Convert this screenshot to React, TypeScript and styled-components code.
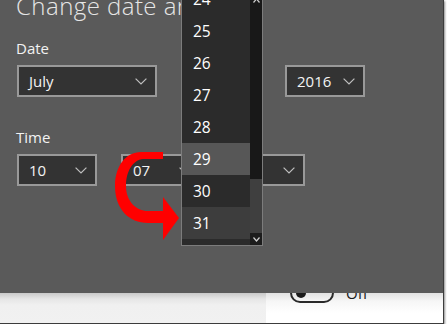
import React from "react";
import styled, { createGlobalStyle } from "styled-components";

const Global = createGlobalStyle`
  html, body { margin: 0; padding: 0; background: #ffffff; }
  body { font-family: "Open Sans", "Noto Sans", sans-serif; }
  * { box-sizing: border-box; }
`;

const Window = styled.div`
  width: 444px;
  height: 324px;
  display: flex;
  flex-direction: column;
  overflow: hidden;
  border-right: 1px solid #3c3c3c;
  border-bottom: 1px solid #3c3c3c;
  box-shadow: 1px 1px 2px rgba(0, 0, 0, 0.45);
`;

const Overlay = styled.div`
  position: relative;
  z-index: 1;
  height: 293px;
  flex: none;
  background: #5a5a5a;
  padding-left: 16px;
  display: flex;
  flex-direction: column;
`;

const Title = styled.div`
  margin-top: -9px;
  width: 230px;
  overflow: hidden;
  font-size: 24px;
  letter-spacing: 0.45px;
  line-height: 30px;
  font-weight: 300;
  color: #e6e6e6;
  white-space: nowrap;
`;

const Section = styled.div<{ $top: number }>`
  margin-top: ${(p) => p.$top}px;
  display: flex;
  flex-direction: column;
  gap: 7px;
`;

const Label = styled.div`
  font-size: 15px;
  line-height: 20px;
  color: #f2f2f2;
`;

const Row = styled.div`
  display: flex;
  gap: 24px;
  padding-left: 1px;
`;

const Combo = styled.div<{ $w: number }>`
  width: ${(p) => p.$w}px;
  height: 32px;
  border: 2px solid #999999;
  background: #333333;
  display: flex;
  align-items: center;
  justify-content: space-between;
  padding: 0 8px 0 10px;
  color: #f4f4f4;
  font-size: 15px;
`;

const Chevron = ({ color = "#bfbfbf" }: { color?: string }) => (
  <svg width="12" height="7" viewBox="0 0 12 7">
    <path d="M0.6 0.6 L6 6 L11.4 0.6" fill="none" stroke={color} strokeWidth="1.2" />
  </svg>
);

const Popup = styled.div`
  position: absolute;
  left: 181px;
  top: -18px;
  width: 82px;
  height: 264px;
  border: 1px solid #7c7c7c;
  background: #2b2b2b;
  display: flex;
  overflow: hidden;
`;

const List = styled.div`
  width: 68px;
  display: flex;
  flex-direction: column;
`;

const Item = styled.div<{ $tone?: "sel" | "hover" }>`
  height: 32px;
  flex: none;
  display: flex;
  align-items: center;
  padding-left: 11px;
  font-size: 15.5px;
  color: #ffffff;
  background: ${(p) => (p.$tone === "sel" ? "#575757" : p.$tone === "hover" ? "#3d3d3d" : "#2b2b2b")};
`;

const Scrollbar = styled.div`
  width: 12px;
  display: flex;
  flex-direction: column;
  background: #181818;
`;

const ScrollUp = styled.div`
  height: 22px;
  display: flex;
  align-items: flex-end;
  justify-content: center;
  padding-bottom: 2px;
`;

const Track = styled.div`
  flex: 1;
`;

const Thumb = styled.div`
  height: 54px;
  background: #3f3f3f;
`;

const ScrollDown = styled.div`
  height: 12px;
  display: flex;
  align-items: center;
  justify-content: center;
  background: #1c1c1c;
`;

const Arrow = styled.svg`
  position: absolute;
  left: 0;
  top: 0;
  pointer-events: none;
`;

const Bottom = styled.div`
  flex: 1;
  display: flex;
`;

const BottomLeft = styled.div`
  width: 266px;
  background: linear-gradient(#c9c9c9 0px, #e6e6e6 6px, #f0f0f0 12px, #f1f1f1);
`;

const BottomRight = styled.div`
  flex: 1;
  background: linear-gradient(#e2e2e2 0px, #f6f6f6 8px, #ffffff 20px);
  display: flex;
  align-items: flex-start;
  padding-left: 24px;
  gap: 12px;
`;

const Toggle = styled.div`
  margin-top: -10px;
  width: 44px;
  height: 20px;
  border: 2px solid #2a2a2a;
  border-radius: 10px;
  display: flex;
  align-items: center;
  padding-left: 4px;
`;

const Knob = styled.div`
  width: 10px;
  height: 10px;
  border-radius: 50%;
  background: #1a1a1a;
`;

const ToggleText = styled.div`
  margin-top: -10px;
  font-size: 15px;
  line-height: 20px;
  color: #1a1a1a;
`;

export default function App() {
  const days = ["24", "25", "26", "27", "28", "29", "30", "31", "1"];
  return (
    <>
      <Global />
      <Window>
        <Overlay>
          <Title>Change date and time</Title>
          <Section $top={17}>
            <Label>Date</Label>
            <Row>
              <Combo $w={140}>
                <span>July</span>
                <Chevron />
              </Combo>
              <Combo $w={80}>
                <Chevron />
              </Combo>
              <Combo $w={80}>
                <span>2016</span>
                <Chevron />
              </Combo>
            </Row>
          </Section>
          <Section $top={30}>
            <Label>Time</Label>
            <Row>
              <Combo $w={80}>
                <span>10</span>
                <Chevron />
              </Combo>
              <Combo $w={80}>
                <span>07</span>
                <Chevron />
              </Combo>
              <Combo $w={80}>
                <span />
                <Chevron />
              </Combo>
            </Row>
          </Section>

          <Popup>
            <List>
              {days.map((d) => (
                <Item key={d} $tone={d === "29" ? "sel" : d === "31" ? "hover" : undefined}>
                  {d}
                </Item>
              ))}
            </List>
            <Scrollbar>
              <ScrollUp>
                <svg width="7" height="5" viewBox="0 0 7 5">
                  <path d="M0.5 4.5 L3.5 1 L6.5 4.5" fill="none" stroke="#d0d0d0" strokeWidth="1.2" />
                </svg>
              </ScrollUp>
              <Track />
              <Thumb />
              <ScrollDown>
                <svg width="7" height="5" viewBox="0 0 7 5">
                  <path d="M0.5 0.5 L3.5 4 L6.5 0.5" fill="none" stroke="#d0d0d0" strokeWidth="1.2" />
                </svg>
              </ScrollDown>
            </Scrollbar>
          </Popup>

          <Arrow width="444" height="293" viewBox="0 0 444 293">
            <path
              d="M163 152 L141 152 C126 152 115 166 115 186 C115 209 129 223 148 223 L165 223 L165 211 L148 211 C136 211 126 201 126 186 C126 171 133 160 143 159 L163 159 Z"
              fill="#ff0000"
            />
            <path d="M163 197 L179 218 L163 240 Z" fill="#ff0000" />
          </Arrow>
        </Overlay>
        <Bottom>
          <BottomLeft />
          <BottomRight>
            <Toggle>
              <Knob />
            </Toggle>
            <ToggleText>Off</ToggleText>
          </BottomRight>
        </Bottom>
      </Window>
    </>
  );
}
